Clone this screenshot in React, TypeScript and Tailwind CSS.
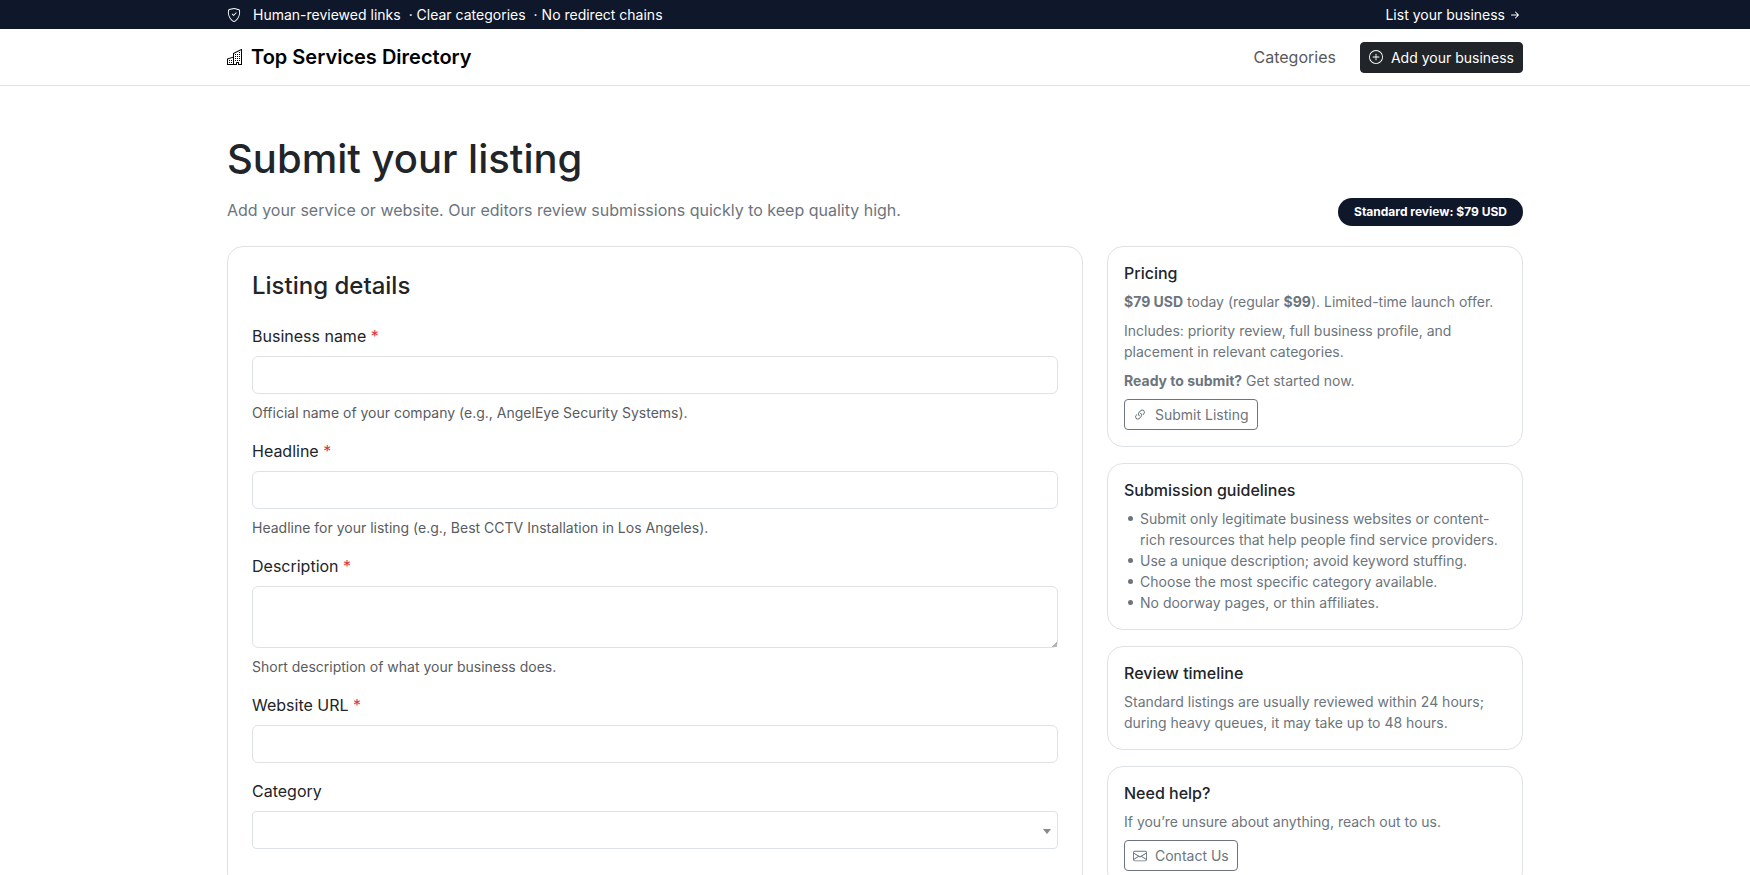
import type { ReactNode } from "react";
import { BsArrowRightShort, BsBuildings, BsEnvelope, BsLink45Deg, BsPlusCircle, BsShieldCheck } from "react-icons/bs";

const inputClass = "block w-full rounded-md border border-[#dee2e6] bg-white px-3 text-base text-[#212529] outline-none focus:border-[#86b7fe]";
const outlineButtonClass = "inline-flex cursor-pointer items-center gap-2 rounded border border-[#6c757d] px-2 py-1 align-top text-sm leading-[21px] text-[#6c757d] hover:bg-[#6c757d] hover:text-white";

const guidelines = [
  "Submit only legitimate business websites or content-rich resources that help people find service providers.",
  "Use a unique description; avoid keyword stuffing.",
  "Choose the most specific category available.",
  "No doorway pages, or thin affiliates.",
];

function Field({ id, label, required, hint, children }: { id: string; label: string; required?: boolean; hint?: string; children: ReactNode }) {
  return (
    <div className="mb-4">
      <label className="mb-2 block" htmlFor={id}>
        {label} {required && <span className="text-[#dc3545]">*</span>}
      </label>
      {children}
      {hint && <p className="mt-2 text-sm leading-[21px] text-[#595c5f]" id={`${id}-hint`}>{hint}</p>}
    </div>
  );
}

function SideCard({ title, children }: { title: string; children: ReactNode }) {
  return (
    <section className="rounded-2xl border border-[#dee2e6] bg-white p-4 text-sm leading-[21px] text-[#6c757d]">
      <h2 className="mb-2 text-base leading-5 font-medium text-[#212529]">{title}</h2>
      {children}
    </section>
  );
}

function TopBar() {
  return (
    <div className="bg-[#0f172a] py-1 text-sm leading-[21px] text-white">
      <div className="mx-auto flex max-w-[1320px] items-center justify-between px-3">
        <div className="flex items-center gap-3">
          <BsShieldCheck size={14} aria-hidden="true" />
          <div className="flex gap-2">
            <span>Human-reviewed links</span>
            <span>· Clear categories</span>
            <span>· No redirect chains</span>
          </div>
        </div>
        <a className="flex items-center gap-0.5" href="#submit">
          List your business
          <BsArrowRightShort size={16} aria-hidden="true" />
        </a>
      </div>
    </div>
  );
}

function NavBar() {
  return (
    <header className="border-b border-[#dee2e6] bg-white py-2">
      <nav className="mx-auto flex h-10 max-w-[1320px] items-center justify-between px-3">
        <a className="flex items-center gap-2 text-xl font-semibold text-black" href="#home">
          <BsBuildings size={16} aria-hidden="true" />
          Top Services Directory
        </a>
        <div className="flex items-center gap-4">
          <a className="px-2 text-[#595959] hover:text-black" href="#categories">Categories</a>
          <a className="inline-flex items-center gap-2 rounded border border-[#212529] bg-[#212529] px-2 py-1 text-sm leading-[21px] text-white" href="#submit">
            <BsPlusCircle size={14} aria-hidden="true" />
            Add your business
          </a>
        </div>
      </nav>
    </header>
  );
}

function ListingForm() {
  return (
    <form className="rounded-2xl border border-[#dee2e6] bg-white p-6" id="submit">
      <h2 className="mb-6 text-2xl leading-[29px] font-medium">Listing details</h2>
      <Field id="name" label="Business name" required hint="Official name of your company (e.g., AngelEye Security Systems).">
        <input className={`${inputClass} h-[38px]`} id="name" type="text" aria-describedby="name-hint" />
      </Field>
      <Field id="headline" label="Headline" required hint="Headline for your listing (e.g., Best CCTV Installation in Los Angeles).">
        <input className={`${inputClass} h-[38px]`} id="headline" type="text" aria-describedby="headline-hint" />
      </Field>
      <Field id="description" label="Description" required hint="Short description of what your business does.">
        <textarea className={`${inputClass} h-[62px] resize-y py-1.5 [&::-webkit-resizer]:bg-[linear-gradient(135deg,transparent_80%,#b4b4b4_80%)]`} id="description" aria-describedby="description-hint" />
      </Field>
      <Field id="website" label="Website URL" required>
        <input className={`${inputClass} h-[38px]`} id="website" type="url" />
      </Field>
      <Field id="category" label="Category">
        <div className="relative">
          <select className="block h-[38px] w-full appearance-none rounded border border-[#dee2e6] bg-white px-3 outline-none" id="category" defaultValue="">
            <option value="" />
          </select>
          <svg className="pointer-events-none absolute top-[18px] right-[7px]" width="8" height="5" viewBox="0 0 8 5" aria-hidden="true">
            <path d="M0 0h8L4 5z" fill="#888" />
          </svg>
        </div>
      </Field>
    </form>
  );
}

function Sidebar() {
  return (
    <aside className="flex flex-col gap-4">
      <SideCard title="Pricing">
        <p className="mb-2"><b>$79 USD</b> today (regular <b>$99</b>). Limited-time launch offer.</p>
        <p className="mb-2">Includes: priority review, full business profile, and placement in relevant categories.</p>
        <p className="mb-2"><b>Ready to submit?</b> Get started now.</p>
        <button className={outlineButtonClass} type="button">
          <BsLink45Deg size={14} aria-hidden="true" />
          Submit Listing
        </button>
      </SideCard>
      <SideCard title="Submission guidelines">
        <ul className="pl-1">
          {guidelines.map((text) => (
            <li className="flex gap-[7px] before:mt-2 before:size-[5px] before:shrink-0 before:rounded-full before:bg-current" key={text}>{text}</li>
          ))}
        </ul>
      </SideCard>
      <SideCard title="Review timeline">
        <p>Standard listings are usually reviewed within 24 hours; during heavy queues, it may take up to 48 hours.</p>
      </SideCard>
      <SideCard title="Need help?">
        <p className="mb-2">If you’re unsure about anything, reach out to us.</p>
        <button className={outlineButtonClass} type="button">
          <BsEnvelope size={14} aria-hidden="true" />
          Contact Us
        </button>
      </SideCard>
    </aside>
  );
}

export default function App() {
  return (
    <div className="min-h-screen bg-white font-['Inter',sans-serif] text-base text-[#212529]">
      <TopBar />
      <NavBar />
      <main className="mx-auto max-w-[1320px] px-3 py-12">
        <div className="mb-5 flex items-end justify-between">
          <div>
            <h1 className="mb-3.5 text-[40px] leading-[50px] font-medium">Submit your listing</h1>
            <p className="mb-1 text-[#6c757d]">Add your service or website. Our editors review submissions quickly to keep quality high.</p>
          </div>
          <span className="rounded-full bg-[#0f172a] px-4 py-2 text-xs leading-3 font-bold text-white">Standard review: $79 USD</span>
        </div>
        <div className="-mx-3 flex items-start">
          <div className="w-2/3 px-3">
            <ListingForm />
          </div>
          <div className="w-1/3 px-3">
            <Sidebar />
          </div>
        </div>
      </main>
    </div>
  );
}
